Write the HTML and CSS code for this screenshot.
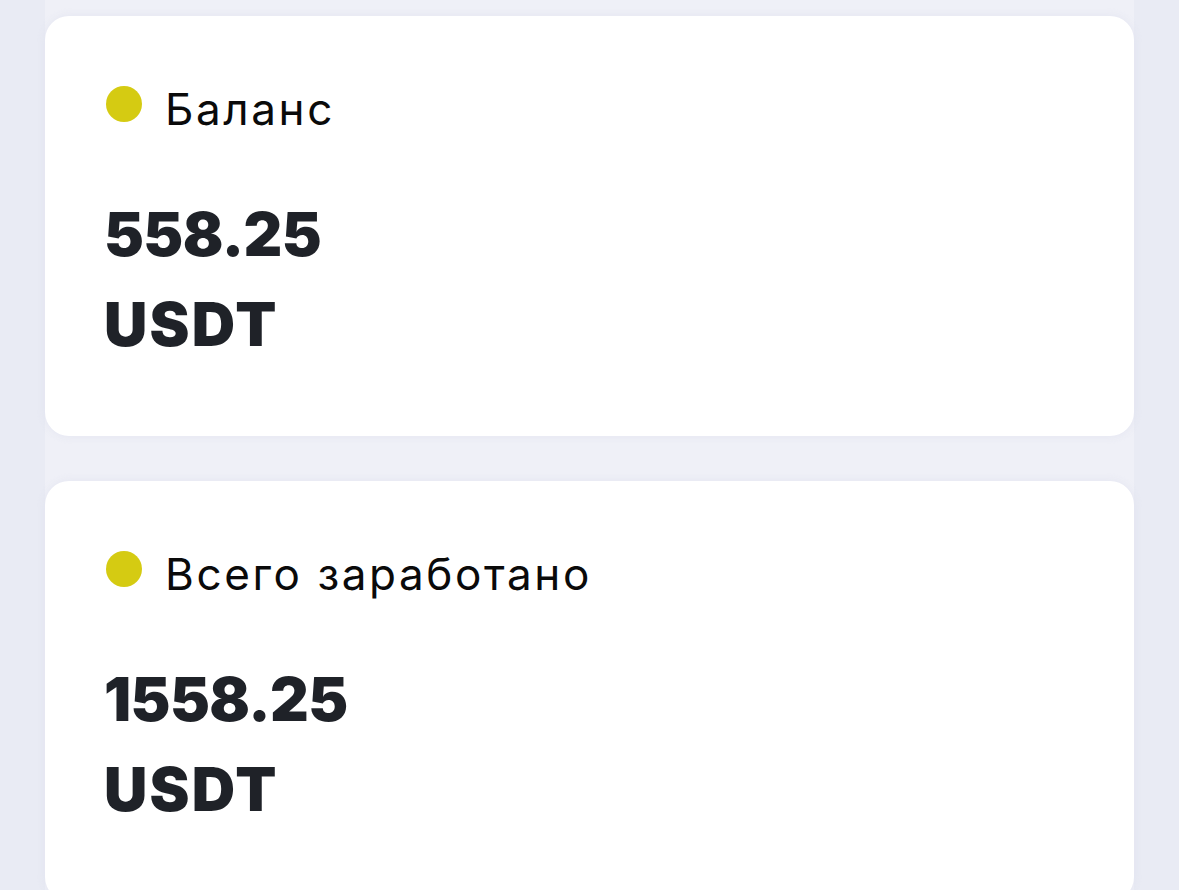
FILE: index.html
```html
<!DOCTYPE html>
<html lang="ru">
<head>
<meta charset="utf-8">
<title>Баланс</title>
<link rel="stylesheet" href="styles.css">
</head>
<body>
<main class="wrap">
  <section class="card">
    <div class="label-row"><span class="dot"></span><span class="label">Баланс</span></div>
    <div class="amount"><div class="value">558.25</div><div class="currency">USDT</div></div>
  </section>
  <section class="card">
    <div class="label-row"><span class="dot"></span><span class="label">Всего заработано</span></div>
    <div class="amount"><div class="value">1558.25</div><div class="currency">USDT</div></div>
  </section>
</main>
</body>
</html>
```
FILE: styles.css
```css
html, body {
  margin: 0;
  padding: 0;
  background: #e9ebf4;
  height: 100%;
  overflow: hidden;
}
.wrap {
  margin: 0 45px;
  padding-top: 16px;
  display: flex;
  flex-direction: column;
  gap: 45px;
  background: #eff0f7;
  min-height: 100%;
}
.card {
  background: #ffffff;
  border-radius: 24px;
  padding: 71px 61px 67px;
  box-shadow: 0 0 8px rgba(220, 222, 236, 0.6);
}
.label-row {
  display: flex;
  align-items: center;
  gap: 23px;
  height: 44px;
}
.dot {
  width: 36px;
  height: 36px;
  border-radius: 50%;
  background: #d5cb12;
  margin-bottom: 10px;
  flex: none;
}
.label {
  font-family: Inter, "Noto Sans", sans-serif;
  font-size: 44px;
  line-height: 44px;
  letter-spacing: 2.6px;
  color: #0a0a0a;
}
.amount {
  margin-top: 58px;
  margin-left: -2px;
  font-family: Inter, "Noto Sans", sans-serif;
  font-weight: 900;
  font-size: 60px;
  line-height: 90px;
  color: #1f2228;
}
.value {
  letter-spacing: -0.6px;
}
.currency {
  letter-spacing: 2.2px;
}
```
